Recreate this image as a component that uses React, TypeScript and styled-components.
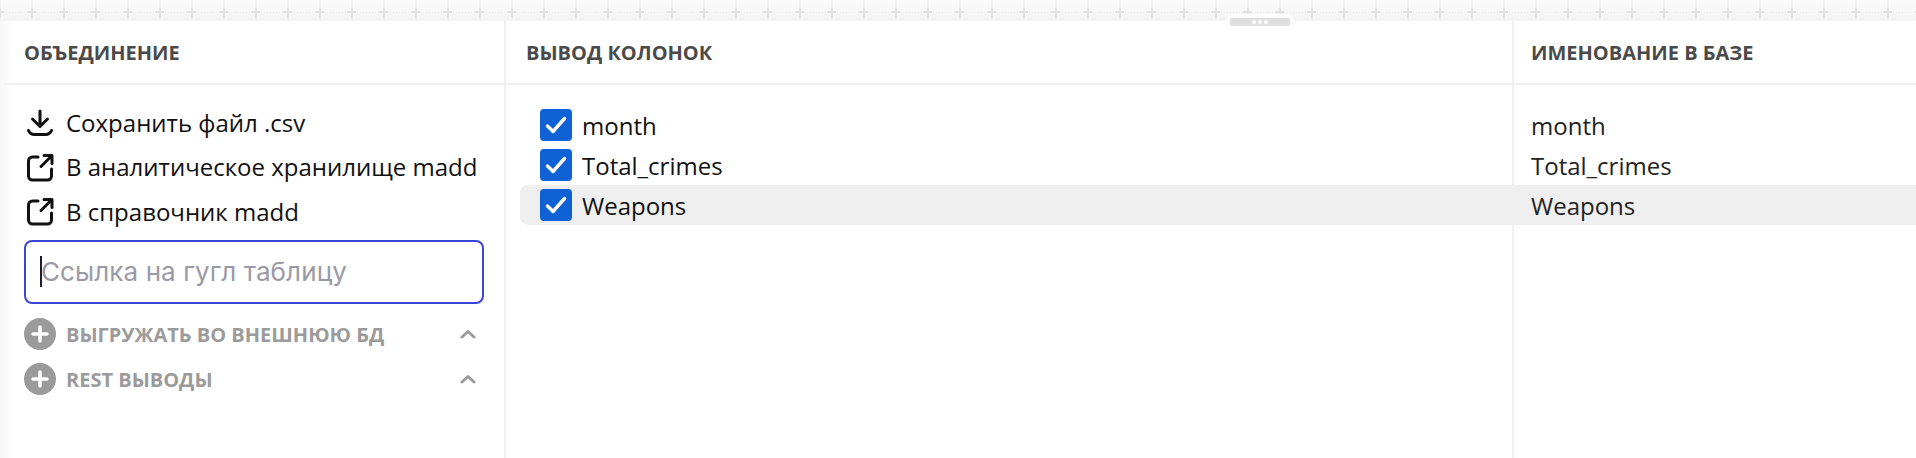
import styled, { createGlobalStyle } from "styled-components";

const GlobalStyle = createGlobalStyle`
  html, body {
    margin: 0;
    padding: 0;
    background: #fff;
  }
`;

const Page = styled.div`
  width: 1916px;
  height: 458px;
  display: flex;
  flex-direction: column;
  overflow: hidden;
  font-family: "Open Sans", sans-serif;
  background: #fff;
`;

const Canvas = styled.div`
  position: relative;
  flex: 0 0 21px;
  background-image:
    linear-gradient(90deg, #e1e1e1 9px, transparent 9px),
    linear-gradient(90deg, #e1e1e1 2px, transparent 2px),
    linear-gradient(90deg, #f0f0f0 2px, transparent 2px),
    linear-gradient(90deg, #e8e8e8 1px, transparent 1px),
    linear-gradient(#fbfbfb, #f3f3f3);
  background-repeat: repeat-x, repeat-x, repeat-x, repeat-x, no-repeat;
  background-size: 32px 2px, 32px 9px, 32px 21px, 3px 1px, 100% 100%;
  background-position: 27px 11px, 31px 8px, 31px 0, 0 12px, 0 0;
`;

const Handle = styled.div`
  position: absolute;
  left: 1226px;
  top: 14px;
  width: 68px;
  height: 12px;
  box-sizing: border-box;
  padding: 4px;
  background: #fff;
  border-radius: 7px 7px 0 0;
  z-index: 2;
`;

const HandleBar = styled.div`
  height: 8px;
  border-radius: 2px;
  background: #dedede;
  display: flex;
  align-items: center;
  justify-content: center;
  gap: 2px;
`;

const HandleDot = styled.span`
  width: 4px;
  height: 4px;
  border-radius: 50%;
  background: #fff;
`;

const Columns = styled.div`
  flex: 1;
  display: grid;
  grid-template-columns: 506px 1008px 1fr;
  min-height: 0;
`;

const Column = styled.section<{ $first?: boolean; $last?: boolean }>`
  display: flex;
  flex-direction: column;
  padding-left: ${(p) => (p.$first ? 4 : 0)}px;
  border-right: ${(p) => (p.$last ? "none" : "2px solid #f0f0f0")};
  background: ${(p) =>
    p.$first ? "linear-gradient(90deg, #f7f7f7, #ffffff 14px)" : "#fff"};
`;

const ColumnHead = styled.h2<{ $inset: number }>`
  margin: 0;
  height: 62px;
  display: flex;
  align-items: center;
  padding-left: ${(p) => p.$inset}px;
  border-bottom: 2px solid #f0f0f0;
  font-size: 20px;
  font-weight: 700;
  color: #4a4a4a;
`;

const OutputList = styled.div`
  display: flex;
  flex-direction: column;
  padding: 15px 20px 0;
`;

const OutputRow = styled.div`
  display: flex;
  align-items: center;
  gap: 10px;
  height: 44.5px;
  font-size: 24px;
  color: #111;
`;

const ExportInput = styled.div`
  box-sizing: border-box;
  height: 64px;
  margin: 6px 0 8px;
  padding-left: 14px;
  display: flex;
  align-items: center;
  border: 2px solid #3a46d8;
  border-radius: 8px;
  font-family: Inter, sans-serif;
  font-size: 26px;
  letter-spacing: 0.1px;
  color: #9a9aa6;
`;

const Caret = styled.span`
  width: 2px;
  height: 31px;
  margin-right: -1px;
  background: #1c1c3a;
`;

const Section = styled.div`
  display: flex;
  align-items: center;
  gap: 10px;
  height: 45px;
  font-size: 20px;
  font-weight: 700;
  color: #9b9b9b;
`;

const SectionTitle = styled.span`
  flex: 1;
`;

const PlusBadge = styled.span`
  flex: 0 0 32px;
  height: 32px;
  border-radius: 50%;
  background: #9b9b9b;
  display: flex;
  align-items: center;
  justify-content: center;
`;

const ChevronSlot = styled.span`
  display: flex;
  margin-right: 8px;
`;

const Rows = styled.div`
  display: flex;
  flex-direction: column;
  padding-top: 20px;
`;

const FieldRow = styled.div<{ $active?: boolean }>`
  display: flex;
  align-items: center;
  height: 40px;
  margin: 0 -2px 0 14px;
  padding-left: 20px;
  gap: 10px;
  font-size: 24px;
  color: #111;
  background: ${(p) => (p.$active ? "#efefef" : "transparent")};
  border-radius: 8px 0 0 8px;
`;

const CheckBox = styled.span`
  flex: 0 0 32px;
  height: 32px;
  border-radius: 4px;
  background: #0f62d6;
  display: flex;
  align-items: center;
  justify-content: center;
`;

const NameCell = styled.div<{ $active?: boolean }>`
  display: flex;
  align-items: center;
  height: 40px;
  padding-left: 17px;
  font-size: 24px;
  color: #222;
  background: ${(p) => (p.$active ? "#efefef" : "transparent")};
`;

const DownloadIcon = () => (
  <svg width="32" height="32" viewBox="0 0 32 32" fill="none" stroke="#111" strokeWidth="3" strokeLinecap="round" strokeLinejoin="round">
    <path d="M16 5v15M8.500 13l7.500 7.500 7.500-7.500M4.500 24.500c1 2.500 3 4 6 4h11c3 0 5-1.500 6-4" />
  </svg>
);

const ExternalIcon = () => (
  <svg width="32" height="32" viewBox="0 0 32 32" fill="none" stroke="#111" strokeWidth="3" strokeLinecap="round" strokeLinejoin="round">
    <path d="M14 6H8.500A4 4 0 0 0 4.500 10v15A4 4 0 0 0 8.500 29h15a4 4 0 0 0 4-4v-7M20 4.500h8v8M27.500 5 17 15.500" />
  </svg>
);

const PlusIcon = () => (
  <svg width="18" height="18" viewBox="0 0 18 18" stroke="#fff" strokeWidth="3.500" strokeLinecap="round">
    <path d="M9 2v14M2 9h14" />
  </svg>
);

const ChevronIcon = () => (
  <svg width="16" height="10" viewBox="0 0 16 10" fill="none" stroke="#9b9b9b" strokeWidth="3" strokeLinecap="round" strokeLinejoin="round">
    <path d="M2 8l6-5.500L14 8" />
  </svg>
);

const CheckIcon = () => (
  <svg width="22" height="18" viewBox="0 0 22 18" fill="none" stroke="#fff" strokeWidth="3.400" strokeLinecap="round" strokeLinejoin="round">
    <path d="M2.500 10l5.500 5.500L19.500 2.500" />
  </svg>
);

const fields = ["month", "Total_crimes", "Weapons"];

export default function App() {
  return (
    <Page>
      <GlobalStyle />
      <Canvas>
        <Handle>
          <HandleBar>
            <HandleDot />
            <HandleDot />
            <HandleDot />
          </HandleBar>
        </Handle>
      </Canvas>
      <Columns>
        <Column $first>
          <ColumnHead $inset={20}>ОБЪЕДИНЕНИЕ</ColumnHead>
          <OutputList>
            <OutputRow>
              <DownloadIcon />
              Сохранить файл .csv
            </OutputRow>
            <OutputRow>
              <ExternalIcon />
              В аналитическое хранилище madd
            </OutputRow>
            <OutputRow>
              <ExternalIcon />
              В справочник madd
            </OutputRow>
            <ExportInput>
              <Caret />
              Ссылка на гугл таблицу
            </ExportInput>
            <Section>
              <PlusBadge>
                <PlusIcon />
              </PlusBadge>
              <SectionTitle>ВЫГРУЖАТЬ ВО ВНЕШНЮЮ БД</SectionTitle>
              <ChevronSlot>
                <ChevronIcon />
              </ChevronSlot>
            </Section>
            <Section>
              <PlusBadge>
                <PlusIcon />
              </PlusBadge>
              <SectionTitle>REST ВЫВОДЫ</SectionTitle>
              <ChevronSlot>
                <ChevronIcon />
              </ChevronSlot>
            </Section>
          </OutputList>
        </Column>
        <Column>
          <ColumnHead $inset={20}>ВЫВОД КОЛОНОК</ColumnHead>
          <Rows>
            {fields.map((name, i) => (
              <FieldRow key={name} $active={i === 2}>
                <CheckBox>
                  <CheckIcon />
                </CheckBox>
                {name}
              </FieldRow>
            ))}
          </Rows>
        </Column>
        <Column $last>
          <ColumnHead $inset={17}>ИМЕНОВАНИЕ В БАЗЕ</ColumnHead>
          <Rows>
            {fields.map((name, i) => (
              <NameCell key={name} $active={i === 2}>
                {name}
              </NameCell>
            ))}
          </Rows>
        </Column>
      </Columns>
    </Page>
  );
}
